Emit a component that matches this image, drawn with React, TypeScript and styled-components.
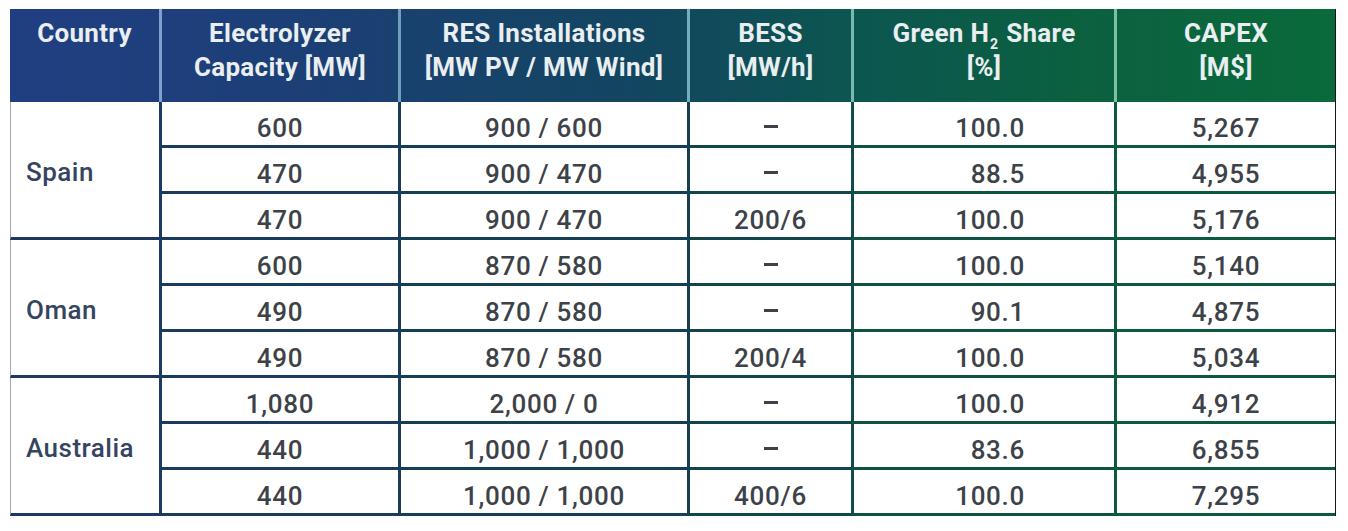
import React from "react";
import styled, { createGlobalStyle } from "styled-components";

const Global = createGlobalStyle`
  html, body { margin: 0; padding: 0; background: #ffffff; }
  body { font-family: Roboto, "Liberation Sans", Arial, sans-serif; }
`;

const Page = styled.div`
  padding: 9px 0 0 10px;
`;

const Grid = styled.div`
  display: grid;
  grid-template-columns: 149px 239px 289px 164px 263px 221px;
  grid-template-rows: 93px repeat(9, 46px);
  width: 1325px;
  border-right: 1px solid #151515;
  background: #ffffff;
`;

const HeaderBand = styled.div`
  grid-column: 1 / -1;
  grid-row: 1;
  display: grid;
  grid-template-columns: subgrid;
  background: linear-gradient(
    90deg,
    #203f82 0%,
    #1c3f76 22%,
    #12465f 48%,
    #0c5650 64%,
    #0b6040 80%,
    #0a6a3b 100%
  );
`;

const HeadCell = styled.div<{ $divider?: string }>`
  box-sizing: border-box;
  border-left: ${(p) => (p.$divider ? `3px solid ${p.$divider}` : "none")};
  padding-top: 7px;
  text-align: center;
  color: #e9eef0;
  font-weight: 700;
  font-size: 26px;
  line-height: 34px;
  letter-spacing: 0.3px;
`;

const Sub = styled.sub`
  font-size: 14px;
  line-height: 0;
  vertical-align: -7px;
  margin: 0 1px;
`;

const CountryCell = styled.div<{ $last?: boolean }>`
  grid-row: span 3;
  grid-column: 1;
  box-sizing: border-box;
  display: flex;
  align-items: center;
  padding: 5px 0 0 15px;
  border-left: 1px solid #a3a8ae;
  border-bottom: 3px solid #1f3763;
  box-shadow: ${(p) => (p.$last ? "0 2px 0 #8ea4c4" : "none")};
  color: #35445f;
  font-weight: 500;
  font-size: 26px;
  line-height: 30px;
  letter-spacing: 0.5px;
`;

type Align = "center" | "right";

const DataCell = styled.div<{
  $line: string;
  $vline: string;
  $align: Align;
  $last?: boolean;
  $shadow: string;
}>`
  box-sizing: border-box;
  display: flex;
  align-items: center;
  justify-content: ${(p) => (p.$align === "right" ? "flex-end" : "center")};
  padding: 9px ${(p) => (p.$align === "right" ? "89px" : "0")} 0 0;
  border-left: 3px solid ${(p) => p.$vline};
  border-bottom: 3px solid ${(p) => p.$line};
  box-shadow: ${(p) => (p.$last ? `0 2px 0 ${p.$shadow}` : "none")};
  color: #3d4248;
  font-weight: 500;
  font-size: 26px;
  line-height: 30px;
  letter-spacing: 0.7px;
`;

const Dash = styled.span`
  display: inline-block;
  width: 14px;
  height: 3px;
  margin-top: -4px;
  background: #3d4248;
`;

const lineColors = ["#1e3863", "#193c5e", "#143f55", "#11464c", "#0e5241", "#0c5a3b"];
const vlineColors = ["", "#1d3a66", "#1b3b5d", "#173f52", "#124b4a", "#0d5a3d"];
const shadowColors = ["#8ea4c4", "#8ea8c2", "#8eb2be", "#8fbcb6", "#8ec4ac", "#8ec8a6"];
const headDividers = ["", "#7f9fcc", "#6f9fbe", "#73aebc", "#7ab9b0", "#7fc0a2"];

type Row = [string, string, string, string, string];

const groups: { country: string; rows: Row[] }[] = [
  {
    country: "Spain",
    rows: [
      ["600", "900 / 600", "–", "100.0", "5,267"],
      ["470", "900 / 470", "–", "88.5", "4,955"],
      ["470", "900 / 470", "200/6", "100.0", "5,176"],
    ],
  },
  {
    country: "Oman",
    rows: [
      ["600", "870 / 580", "–", "100.0", "5,140"],
      ["490", "870 / 580", "–", "90.1", "4,875"],
      ["490", "870 / 580", "200/4", "100.0", "5,034"],
    ],
  },
  {
    country: "Australia",
    rows: [
      ["1,080", "2,000 / 0", "–", "100.0", "4,912"],
      ["440", "1,000 / 1,000", "–", "83.6", "6,855"],
      ["440", "1,000 / 1,000", "400/6", "100.0", "7,295"],
    ],
  },
];

const aligns: Align[] = ["center", "center", "center", "right", "center"];

export default function App() {
  return (
    <>
      <Global />
      <Page>
        <Grid>
          <HeaderBand>
            <HeadCell>Country</HeadCell>
            <HeadCell $divider={headDividers[1]}>
              Electrolyzer
              <br />
              Capacity [MW]
            </HeadCell>
            <HeadCell $divider={headDividers[2]}>
              RES Installations
              <br />
              [MW PV / MW Wind]
            </HeadCell>
            <HeadCell $divider={headDividers[3]}>
              BESS
              <br />
              [MW/h]
            </HeadCell>
            <HeadCell $divider={headDividers[4]}>
              Green H<Sub>2</Sub> Share
              <br />
              [%]
            </HeadCell>
            <HeadCell $divider={headDividers[5]}>
              CAPEX
              <br />
              [M$]
            </HeadCell>
          </HeaderBand>
          {groups.map((g, gi) => {
            const lastGroup = gi === groups.length - 1;
            return (
              <React.Fragment key={g.country}>
                <CountryCell $last={lastGroup}>{g.country}</CountryCell>
                {g.rows.map((row, ri) => {
                  const last = lastGroup && ri === g.rows.length - 1;
                  return row.map((v, ci) => (
                    <DataCell
                      key={`${gi}-${ri}-${ci}`}
                      $line={lineColors[ci + 1]}
                      $vline={vlineColors[ci + 1]}
                      $align={aligns[ci]}
                      $last={last}
                      $shadow={shadowColors[ci + 1]}
                    >
                      {v === "–" ? <Dash aria-label="–" /> : v}
                    </DataCell>
                  ));
                })}
              </React.Fragment>
            );
          })}
        </Grid>
      </Page>
    </>
  );
}
